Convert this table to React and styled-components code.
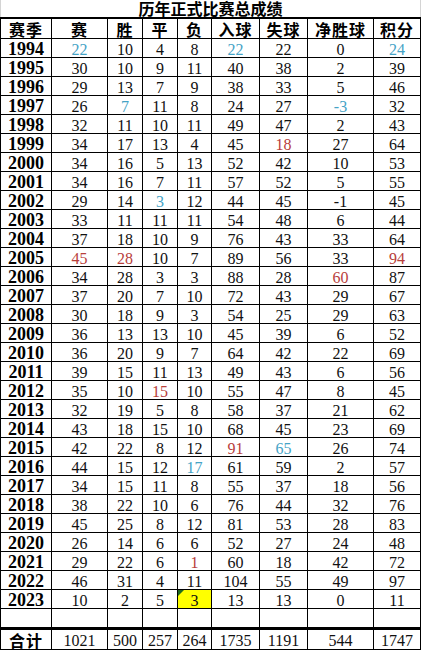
import React from 'react';
import styled, { createGlobalStyle } from 'styled-components';

const GlobalStyle = createGlobalStyle`
    body {
        margin: 0;
        background: #ffffff;
    }
`;

const headers = ['赛季', '赛', '胜', '平', '负', '入球', '失球', '净胜球', '积分'];

const rows = [
    [1994, 22, 10, 4, 8, 22, 22, 0, 24],
    [1995, 30, 10, 9, 11, 40, 38, 2, 39],
    [1996, 29, 13, 7, 9, 38, 33, 5, 46],
    [1997, 26, 7, 11, 8, 24, 27, -3, 32],
    [1998, 32, 11, 10, 11, 49, 47, 2, 43],
    [1999, 34, 17, 13, 4, 45, 18, 27, 64],
    [2000, 34, 16, 5, 13, 52, 42, 10, 53],
    [2001, 34, 16, 7, 11, 57, 52, 5, 55],
    [2002, 29, 14, 3, 12, 44, 45, -1, 45],
    [2003, 33, 11, 11, 11, 54, 48, 6, 44],
    [2004, 37, 18, 10, 9, 76, 43, 33, 64],
    [2005, 45, 28, 10, 7, 89, 56, 33, 94],
    [2006, 34, 28, 3, 3, 88, 28, 60, 87],
    [2007, 37, 20, 7, 10, 72, 43, 29, 67],
    [2008, 30, 18, 9, 3, 54, 25, 29, 63],
    [2009, 36, 13, 13, 10, 45, 39, 6, 52],
    [2010, 36, 20, 9, 7, 64, 42, 22, 69],
    [2011, 39, 15, 11, 13, 49, 43, 6, 56],
    [2012, 35, 10, 15, 10, 55, 47, 8, 45],
    [2013, 32, 19, 5, 8, 58, 37, 21, 62],
    [2014, 43, 18, 15, 10, 68, 45, 23, 69],
    [2015, 42, 22, 8, 12, 91, 65, 26, 74],
    [2016, 44, 15, 12, 17, 61, 59, 2, 57],
    [2017, 34, 15, 11, 8, 55, 37, 18, 56],
    [2018, 38, 22, 10, 6, 76, 44, 32, 76],
    [2019, 45, 25, 8, 12, 81, 53, 28, 83],
    [2020, 26, 14, 6, 6, 52, 27, 24, 48],
    [2021, 29, 22, 6, 1, 60, 18, 42, 72],
    [2022, 46, 31, 4, 11, 104, 55, 49, 97],
    [2023, 10, 2, 5, 3, 13, 13, 0, 11],
];

const totals = ['合计', 1021, 500, 257, 264, 1735, 1191, 544, 1747];

// highlighted cells: "year-columnIndex"
const tones = {
    '1994-1': 'blue', '1994-5': 'blue', '1994-8': 'blue',
    '1997-2': 'blue', '1997-7': 'blue',
    '1999-6': 'red',
    '2002-3': 'blue',
    '2005-1': 'red', '2005-2': 'red', '2005-8': 'red',
    '2006-7': 'red',
    '2012-3': 'red',
    '2015-5': 'red', '2015-6': 'blue',
    '2016-4': 'blue',
    '2021-4': 'red',
    '2023-4': 'marked',
};

const App = () => {
    return (
        <Sheet>
            <GlobalStyle />
            <Title>历年正式比赛总成绩</Title>
            <Grid>
                {headers.map((h) => (
                    <HeadCell key={h}>{h}</HeadCell>
                ))}
                {rows.map((row) =>
                    row.map((v, i) =>
                        i === 0 ? (
                            <YearCell key={`${row[0]}-${i}`}>{v}</YearCell>
                        ) : (
                            <Cell key={`${row[0]}-${i}`} $tone={tones[`${row[0]}-${i}`]}>
                                {v}
                            </Cell>
                        )
                    )
                )}
                {headers.map((h) => (
                    <Cell key={`empty-${h}`} />
                ))}
            </Grid>
            <TotalGrid>
                {totals.map((v, i) =>
                    i === 0 ? <HeadCell key={i}>{v}</HeadCell> : <Cell key={i}>{v}</Cell>
                )}
            </TotalGrid>
        </Sheet>
    );
};

export default App;

const columns = '50px 55px 34px 34px 33px 47px 47px 65px 46px';

const Sheet = styled.div`
    width: 421px;
    display: flex;
    flex-direction: column;
`;

const Title = styled.div`
    height: 17px;
    line-height: 17px;
    text-align: center;
    font-family: "Noto Sans CJK SC", sans-serif;
    font-weight: 700;
    font-size: 16px;
    color: #000;
    border-left: 1px solid #d4d4d4;
    border-right: 1px solid #d4d4d4;
    white-space: nowrap;
`;

const Grid = styled.div`
    display: grid;
    grid-template-columns: ${columns};
    grid-template-rows: 19px;
    grid-auto-rows: 18px;
    gap: 1px;
    padding: 2px 1px 1px;
    background: #000;
`;

const TotalGrid = styled(Grid)`
    grid-template-rows: 19px;
    padding-top: 2px;
`;

const BaseCell = styled.div`
    position: relative;
    background: #fff;
    display: flex;
    align-items: center;
    justify-content: center;
    color: #000;
    white-space: nowrap;
`;

const HeadCell = styled(BaseCell)`
    font-family: "Noto Sans CJK SC", sans-serif;
    font-weight: 700;
    font-size: 16px;
    line-height: 16px;
    letter-spacing: 1px;
`;

const YearCell = styled(BaseCell)`
    font-family: "Liberation Serif", serif;
    font-weight: 700;
    font-size: 18px;
    line-height: 16px;
    padding-top: 1px;
`;

const toneColor = {
    blue: '#45a3c6',
    red: '#b8403b',
};

const Cell = styled(BaseCell)`
    font-family: "Liberation Serif", serif;
    font-size: 16px;
    line-height: 15px;
    padding-top: 2px;
    color: ${(p) => toneColor[p.$tone] || '#111'};
    background: ${(p) => (p.$tone === 'marked' ? '#ffff00' : '#fff')};

    &::before {
        content: '';
        display: ${(p) => (p.$tone === 'marked' ? 'block' : 'none')};
        position: absolute;
        top: 0;
        left: 0;
        border-top: 6px solid #1f6b1f;
        border-right: 6px solid transparent;
    }
`;
